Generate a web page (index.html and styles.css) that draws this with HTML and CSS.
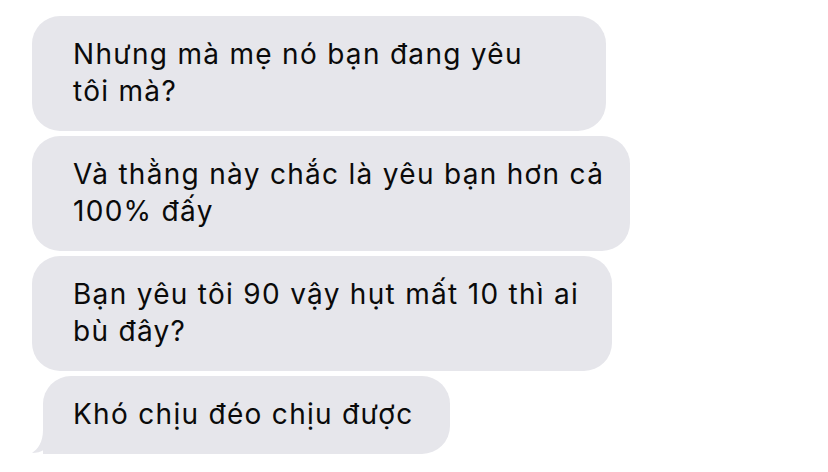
FILE: index.html
```html
<!DOCTYPE html>
<html lang="vi">
<head>
  <meta charset="UTF-8">
  <meta name="viewport" content="width=device-width, initial-scale=1.0">
  <title>Tin nhắn</title>
  <link rel="stylesheet" href="styles.css">
</head>
<body>
  <div class="thread">
    <div class="bubble w1">Nhưng mà mẹ nó bạn đang yêu tôi mà?</div>
    <div class="bubble w2">Và thằng này chắc là yêu bạn hơn cả 100% đấy</div>
    <div class="bubble w3">Bạn yêu tôi 90 vậy hụt mất 10 thì ai bù đây?</div>
    <div class="bubble last">
      Khó chịu đéo chịu được
      <svg class="tail" width="24" height="32" viewBox="0 0 24 32">
        <path d="M11 0 L24 0 L24 30 C20 30 16 29 13 27 C9 30 4 31 0 31 C6 27 11 20 11 8 Z" fill="#e6e6eb"/>
      </svg>
    </div>
  </div>
</body>
</html>
```

FILE: styles.css
```css
body {
  margin: 0;
  background-color: #ffffff;
  font-family: 'Inter', 'Liberation Sans', sans-serif;
  overflow: hidden;
}
.thread {
  display: flex;
  flex-direction: column;
  align-items: flex-start;
  gap: 5px;
  padding: 16px 0 0 32px;
}
.bubble {
  position: relative;
  box-sizing: border-box;
  background-color: #e6e6eb;
  color: #0a0a0a;
  font-size: 28px;
  letter-spacing: 1.3px;
  line-height: 37px;
  padding: 20px 20px 21px 41px;
  border-radius: 28px;
}
.w1 {
  width: 574px;
  padding-right: 60px;
}
.w2 {
  width: 598px;
}
.w3 {
  width: 580px;
}
.last {
  margin-left: 11px;
  padding-left: 30px;
  padding-right: 36px;
  border-bottom-left-radius: 0;
}
.tail {
  position: absolute;
  left: -11px;
  bottom: 0;
}
```
